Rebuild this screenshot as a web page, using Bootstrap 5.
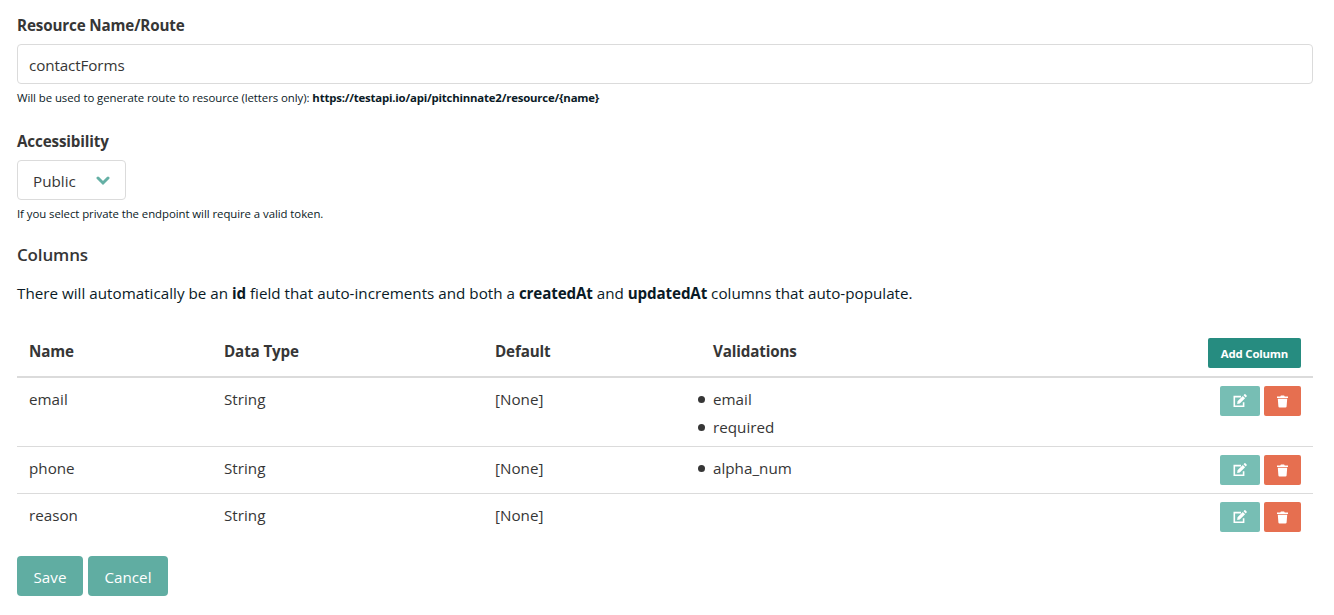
<!DOCTYPE html>
<html lang="en">
<head>
<meta charset="utf-8">
<title>Edit Resource</title>
<link href="https://cdn.jsdelivr.net/npm/bootstrap@5.3.0/dist/css/bootstrap.min.css" rel="stylesheet">
<style>
body{font-family:"Open Sans","Noto Sans",sans-serif;font-size:15.2px;line-height:24px;letter-spacing:.015px;color:#363636;background:#fff}
.resource-form{padding:13px 21px 0 17px}
b,.field-label,.columns-table th{font-weight:700;letter-spacing:-.14px}
.field-label{display:block;margin-bottom:7px}
.form-control{height:40px;padding:8px 11px 6px;border-color:#dbdbdb;border-radius:4px;color:#363636;font-size:inherit;letter-spacing:-.1px}
.hint{font-size:11.4px;line-height:18px;margin-top:5px;color:#0a1a26;letter-spacing:-.06px}
.hint b{letter-spacing:-.19px}
.access-label{margin-top:22px}
.picker{width:109px;height:40px;padding:8px 15px 6px;border:1px solid #dbdbdb;border-radius:4px;background:#fff;color:#363636;letter-spacing:inherit}
.section-title{font-size:17px;line-height:24px;font-weight:600;letter-spacing:-.15px;margin:20px 0 0}
.intro{color:#0a1a26;margin:14px 0 25px}
.columns-table{table-layout:fixed;border-collapse:separate;border-spacing:0;margin:0;--bs-table-color:#363636;--bs-table-bg:transparent;border-color:#dbdbdb}
.columns-table>:not(caption)>*>*{padding:9px 12px 7px;color:#363636}
.columns-table>:not(caption)>*>:last-child{padding:8px 12px}
.columns-table th,.columns-table td{vertical-align:top}
.columns-table>thead>tr>th{border-bottom:2px solid #dbdbdb}
.columns-table>tbody>tr:last-child>td{border-bottom:0}
.columns-table ul{list-style:none;margin:0;padding:0}
.columns-table li{position:relative}
.columns-table li+li{margin-top:4px}
.columns-table li::before{content:"";position:absolute;left:-15px;top:9px;width:7px;height:7px;border-radius:50%;background:#363636}
.btn{--bs-btn-color:#fff;border:0;font-size:inherit;letter-spacing:inherit}
.btn-add{height:30px;width:93px;padding:2px 0 0;background:#268c80;border-radius:2px;font-size:11.4px;font-weight:700;letter-spacing:-.18px}
.btn-edit,.btn-trash{height:30px;border-radius:2px;padding:0;display:flex;align-items:center;justify-content:center}
.btn-edit{width:40px;background:#77beb4}
.btn-trash{width:37px;background:#e66f50}
.form-actions{gap:5px}
.btn-main{height:40px;padding:2px 0 0;border-radius:4px;background:#60ada2}
.btn-save{width:66px}.btn-cancel{width:80px}
.btn,.btn:hover{color:#fff}
</style>
</head>
<body>
<svg class="d-none">
<symbol id="edit" viewBox="0 0 14 14"><path d="M8 2.6H1.3v9.6h9.3V8.3" fill="none" stroke="#fff" stroke-width="1.6"/><path d="M4.5 7.2 9.8 1.9l2.3 2.3-5.3 5.3-2.6.4zM10.5 1.2l.9-.9q.5-.4 1 0l1.2 1.2q.5.5 0 1l-.9.9z" fill="#fff"/></symbol>
<symbol id="trash" viewBox="0 0 11 13"><path d="M0 1.4h3.2L3.9.5h3.2l.7.9H11v1.5H0zM.8 3.8h9.4l-.6 7.7q-.1 1-1.1 1h-6q-1 0-1.1-1z" fill="#fff"/></symbol>
</svg>
<main class="resource-form">
  <label class="field-label" for="name">Resource Name/Route</label>
  <input id="name" class="form-control" value="contactForms">
  <div class="hint">Will be used to generate route to resource (letters only): <b>https://testapi.io/api/pitchinnate2/resource/{name}</b></div>
  <div class="field-label access-label">Accessibility</div>
  <button type="button" class="picker d-flex align-items-center justify-content-between"><span>Public</span>
    <svg width="14" height="10" viewBox="0 0 14 10"><path d="M2 2l5 5 5-5" fill="none" stroke="#65b0a5" stroke-width="3" stroke-linecap="round"/></svg></button>
  <div class="hint">If you select private the endpoint will require a valid token.</div>
  <h2 class="section-title">Columns</h2>
  <p class="intro">There will automatically be an <b>id</b> field that auto-increments and both a <b>createdAt</b> and <b>updatedAt</b> columns that auto-populate.</p>
  <table class="table columns-table">
    <colgroup><col style="width:195px"><col style="width:271px"><col style="width:218px"><col><col style="width:117px"></colgroup>
    <thead><tr><th>Name</th><th>Data Type</th><th>Default</th><th>Validations</th><th><button class="btn btn-add d-block">Add Column</button></th></tr></thead>
    <tbody>
      <tr><td>email</td><td>String</td><td>[None]</td><td><ul><li>email</li><li>required</li></ul></td><td><div class="d-flex gap-1 justify-content-end"><button class="btn btn-edit"><svg width="14" height="14"><use href="#edit"/></svg></button><button class="btn btn-trash"><svg width="11" height="13"><use href="#trash"/></svg></button></div></td></tr>
      <tr><td>phone</td><td>String</td><td>[None]</td><td><ul><li>alpha_num</li></ul></td><td><div class="d-flex gap-1 justify-content-end"><button class="btn btn-edit"><svg width="14" height="14"><use href="#edit"/></svg></button><button class="btn btn-trash"><svg width="11" height="13"><use href="#trash"/></svg></button></div></td></tr>
      <tr><td>reason</td><td>String</td><td>[None]</td><td></td><td><div class="d-flex gap-1 justify-content-end"><button class="btn btn-edit"><svg width="14" height="14"><use href="#edit"/></svg></button><button class="btn btn-trash"><svg width="11" height="13"><use href="#trash"/></svg></button></div></td></tr>
    </tbody>
  </table>
  <div class="d-flex mt-3 form-actions"><button class="btn btn-main btn-save">Save</button><button class="btn btn-main btn-cancel">Cancel</button></div>
</main>
<script src="https://cdn.jsdelivr.net/npm/bootstrap@5.3.0/dist/js/bootstrap.bundle.min.js"></script>
</body>
</html>
